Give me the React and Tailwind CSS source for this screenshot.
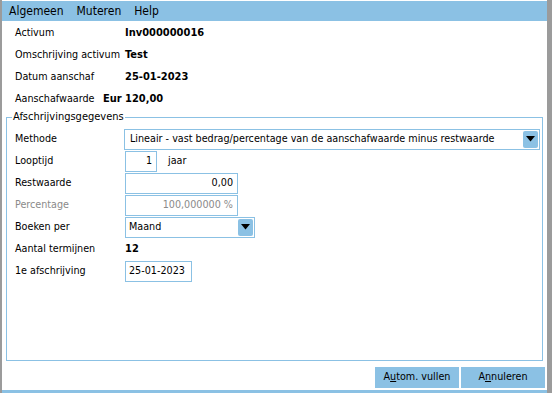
import React from "react";

const F = { fontFamily: '"DejaVu Sans Condensed", "DejaVu Sans", sans-serif' };

function Arrow() {
  return (
    <div className="w-[15px] h-[17px] bg-[#8bc1e4] rounded-[2px] flex items-center justify-center">
      <svg width="9" height="6" viewBox="0 0 9 6"><path d="M0 0 H9 L4.5 5.5 Z" fill="#000" /></svg>
    </div>
  );
}

export default function App() {
  const info = [
    ["Activum", "Inv000000016"],
    ["Omschrijving activum", "Test"],
    ["Datum aanschaf", "25-01-2023"],
    ["Aanschafwaarde", "120,00"],
  ];
  return (
    <div className="w-[552px] h-[393px] flex bg-white text-[10.7px] text-black overflow-hidden whitespace-nowrap" style={F}>
      <div className="w-[2px] h-full bg-[#9b9b9b]" />
      <div className="flex-1 flex flex-col pt-px">
        <div className="h-[20px] bg-[#8bc1e4] flex items-center text-[12px]">
          <span className="ml-[7px]">Algemeen</span>
          <span className="ml-[13px]">Muteren</span>
          <span className="ml-[13px]">Help</span>
        </div>
        <div className="flex flex-col mt-px">
          {info.map(([l, v], i) => (
            <div key={l} className="h-[22px] flex items-center">
              <span className="ml-[13px] w-[88px]">{l}</span>
              <span className="w-[22px] font-bold text-[11px]">{i === 3 ? "Eur" : ""}</span>
              <span className="font-bold text-[11px]">{v}</span>
            </div>
          ))}
        </div>
        <div className="relative ml-[4px] mt-[7px] w-[537px] h-[244px] border border-[#8bc1e4]">
          <span className="absolute -top-[8px] left-[5px] px-px bg-white leading-[14px] text-[11px]">Afschrijvingsgegevens</span>
          <div className="flex flex-col mt-[10px]">
            <div className="h-[22px] flex items-center">
              <span className="ml-[8px] w-[109px]">Methode</span>
              <div className="w-[416px] h-[21px] border border-[#8bc1e4] flex items-center justify-between pl-[5px] pr-px">
                <span>Lineair - vast bedrag/percentage van de aanschafwaarde minus restwaarde</span>
                <Arrow />
              </div>
            </div>
            <div className="h-[22px] flex items-center">
              <span className="ml-[8px] w-[110px]">Looptijd</span>
              <div className="w-[32px] h-[21px] border border-[#8bc1e4] flex items-center justify-end pr-[4px]">1</div>
              <span className="ml-[11px]">jaar</span>
            </div>
            <div className="h-[22px] flex items-center">
              <span className="ml-[8px] w-[110px]">Restwaarde</span>
              <div className="w-[113px] h-[21px] border border-[#8bc1e4] flex items-center justify-end pr-[4px]">0,00</div>
            </div>
            <div className="h-[22px] flex items-center">
              <span className="ml-[8px] w-[110px] text-[#8a8a8a]">Percentage</span>
              <div className="w-[113px] h-[21px] border border-[#8bc1e4] flex items-center justify-end pr-[4px] text-[#8a8a8a]">100,000000 %</div>
            </div>
            <div className="h-[22px] flex items-center">
              <span className="ml-[8px] w-[110px]">Boeken per</span>
              <div className="w-[130px] h-[21px] border border-[#8bc1e4] flex items-center justify-between pl-[3px] pr-px">
                <span>Maand</span>
                <Arrow />
              </div>
            </div>
            <div className="h-[22px] flex items-center">
              <span className="ml-[8px] w-[110px]">Aantal termijnen</span>
              <span className="font-bold text-[11px]">12</span>
            </div>
            <div className="h-[22px] flex items-center">
              <span className="ml-[8px] w-[110px]">1e afschrijving</span>
              <div className="w-[67px] h-[21px] border border-[#8bc1e4] flex items-center pl-[3px]">25-01-2023</div>
            </div>
          </div>
        </div>
        <div className="flex justify-end gap-[2px] mt-[6px] mr-[2px]">
          <div className="w-[84px] h-[21px] bg-[#8bc1e4] flex items-center justify-center">A<u>u</u>tom. vullen</div>
          <div className="w-[84px] h-[21px] bg-[#8bc1e4] flex items-center justify-center">A<u>n</u>nuleren</div>
        </div>
        <div className="mt-auto h-[3px] bg-[#8bc1e4]" />
      </div>
      <div className="w-[5px] h-full bg-[#9b9b9b]" />
    </div>
  );
}
